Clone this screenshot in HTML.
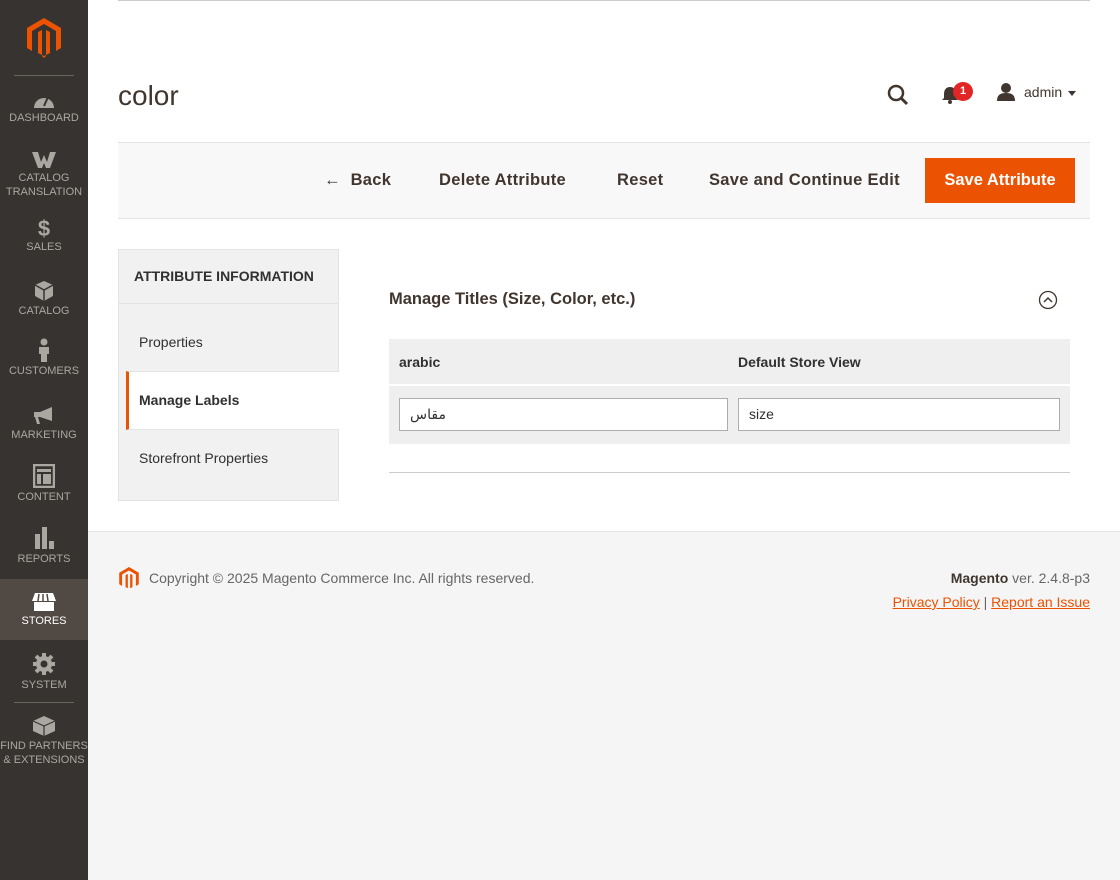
<!DOCTYPE html>
<html><head><meta charset="utf-8"><style>
*{box-sizing:border-box;margin:0;padding:0}
body{width:1120px;height:880px;font-family:"Liberation Sans","DejaVu Sans",sans-serif;background:#fff;position:relative;overflow:hidden;color:#303030}
.side{position:absolute;left:0;top:0;width:88px;height:880px;background:#373330}
.item{position:absolute;left:0;width:88px;text-align:center;color:#aaa6a0;font-size:11px;line-height:14px}
.item svg{display:block;margin:0 auto 2px}
.sep{position:absolute;left:14px;width:60px;height:1px;background:#6a645e}
.abs{position:absolute}
.btn{position:absolute;top:171px;font-size:16.5px;font-weight:bold;color:#41362f;letter-spacing:.3px}
</style></head><body>
<div class="side">
<svg class="abs" style="left:27px;top:18px" width="34" height="40" viewBox="0 0 34 40"><path d="M17 0L34 10V30L29 33V13L17 6L5 13V33L0 30V10Z" fill="#eb5202"/><path d="M11 14L15 12V37L11 35Z M19 12L23 14V35L19 37Z M15 38L17 40L19 38V37L17 38L15 37Z" fill="#eb5202"/></svg>
<div class="sep" style="top:75px"></div>
<div class="item" style="top:91px"><svg width="24" height="18" viewBox="0 0 24 18"><path d="M2 17A10 10 0 1 1 22 17Z" fill="#aaa6a0"/><path d="M12 15L16 6" stroke="#373330" stroke-width="2"/></svg>DASHBOARD</div>
<div class="item" style="top:151px"><svg width="26" height="18" viewBox="0 0 26 18"><path d="M1 1H7L10 11L13 4L16 11L19 1H25L19 17H15L13 12L11 17H7Z" fill="#aaa6a0"/></svg>CATALOG<br>TRANSLATION</div>
<div class="item" style="top:218px"><div style="font-size:22px;font-weight:bold;line-height:22px;color:#aaa6a0">$</div>SALES</div>
<div class="item" style="top:280px"><svg width="22" height="22" viewBox="0 0 22 22"><path d="M11 1L20 5V16L11 21L2 16V5Z" fill="#aaa6a0"/><path d="M2 5L11 10L20 5M11 10V21" stroke="#373330" stroke-width="1.5" fill="none"/></svg>CATALOG</div>
<div class="item" style="top:338px"><svg width="14" height="24" viewBox="0 0 14 24"><circle cx="7" cy="4" r="3.5" fill="#aaa6a0"/><path d="M2 9H12V16H10V24H4V16H2Z" fill="#aaa6a0"/></svg>CUSTOMERS</div>
<div class="item" style="top:406px"><svg width="24" height="20" viewBox="0 0 24 20"><path d="M2 6H8L20 1V15L8 11H6L8 18H5L3 11H2Z" fill="#aaa6a0"/></svg>MARKETING</div>
<div class="item" style="top:464px"><svg width="22" height="24" viewBox="0 0 22 24"><rect x="1" y="1" width="20" height="22" fill="none" stroke="#aaa6a0" stroke-width="2.5"/><rect x="4" y="5" width="14" height="3" fill="#aaa6a0"/><rect x="4" y="10" width="4" height="10" fill="#aaa6a0"/><rect x="10" y="10" width="8" height="10" fill="#aaa6a0"/></svg>CONTENT</div>
<div class="item" style="top:526px"><svg width="22" height="24" viewBox="0 0 22 24"><rect x="2" y="8" width="5" height="15" fill="#aaa6a0"/><rect x="9" y="1" width="5" height="22" fill="#aaa6a0"/><rect x="16" y="15" width="5" height="8" fill="#aaa6a0"/></svg>REPORTS</div>
<div class="abs" style="left:0;top:579px;width:88px;height:61px;background:#514943"></div>
<div class="item" style="top:592px;color:#fff"><svg width="26" height="20" viewBox="0 0 26 20"><path d="M4 1H22L25 9H1Z" fill="#fff"/><path d="M8 2L7 9M12 2V9M16 2L17 9" stroke="#514943" stroke-width="1.5"/><rect x="3" y="10" width="20" height="9" fill="#fff"/></svg>STORES</div>
<div class="item" style="top:652px"><svg width="24" height="24" viewBox="0 0 24 24"><circle cx="12" cy="12" r="8" fill="#aaa6a0"/><path d="M12 1V23M1 12H23M4 4L20 20M20 4L4 20" stroke="#aaa6a0" stroke-width="4"/><circle cx="12" cy="12" r="3.5" fill="#373330"/></svg>SYSTEM</div>
<div class="sep" style="top:702px"></div>
<div class="item" style="top:713px"><svg width="24" height="24" viewBox="0 0 24 24"><path d="M12 3L23 8V18L12 23L1 18V8Z" fill="#aaa6a0"/><path d="M1 8L12 13L23 8M12 13V23" stroke="#373330" stroke-width="1.2" fill="none"/></svg>FIND PARTNERS<br>&amp; EXTENSIONS</div>
</div>

<div class="abs" style="left:118px;top:0;width:972px;height:1px;background:#ccc"></div>
<div class="abs" style="left:118px;top:80px;font-size:28px;color:#41362f">color</div>
<svg class="abs" style="left:886px;top:83px" width="24" height="24" viewBox="0 0 24 24"><circle cx="10" cy="10" r="7" fill="none" stroke="#41362f" stroke-width="2.5"/><path d="M15 15L21 21" stroke="#41362f" stroke-width="3"/></svg>
<svg class="abs" style="left:941px;top:86px" width="18" height="18" viewBox="0 0 18 18"><path d="M9 1C5 1 3 4 3 8V12L1 14H17L15 12V8C15 4 13 1 9 1Z" fill="#41362f"/><circle cx="9" cy="16" r="2" fill="#41362f"/></svg>
<div class="abs" style="left:953px;top:82px;width:20px;height:19px;border-radius:50%;background:#e22626;color:#fff;font-size:11px;font-weight:bold;text-align:center;line-height:19px">1</div>
<svg class="abs" style="left:996px;top:82px" width="20" height="20" viewBox="0 0 20 20"><circle cx="10" cy="6" r="5" fill="#41362f"/><path d="M1 19C1 13 4 11 10 11C16 11 19 13 19 19Z" fill="#41362f"/></svg>
<div class="abs" style="left:1024px;top:84px;font-size:14px;color:#41362f">admin</div>
<div class="abs" style="left:1068px;top:91px;border:4px solid transparent;border-top:5px solid #41362f"></div>

<div class="abs" style="left:118px;top:142px;width:972px;height:77px;background:#f8f8f8;border-top:1px solid #e3e3e3;border-bottom:1px solid #e3e3e3"></div>
<div class="btn" style="left:324px">&#8592;&nbsp; Back</div>
<div class="btn" style="left:439px">Delete Attribute</div>
<div class="btn" style="left:617px">Reset</div>
<div class="btn" style="left:709px">Save and Continue Edit</div>
<div class="abs" style="left:925px;top:158px;width:150px;height:45px;background:#eb5202;color:#fff;font-size:16.5px;font-weight:bold;text-align:center;line-height:45px">Save Attribute</div>

<div class="abs" style="left:118px;top:249px;width:221px;height:252px;background:#f1f1f1;border:1px solid #e3e3e3"></div>
<div class="abs" style="left:134px;top:268px;font-size:14px;font-weight:bold;color:#303030">ATTRIBUTE INFORMATION</div>
<div class="abs" style="left:119px;top:303px;width:219px;height:1px;background:#e3e3e3"></div>
<div class="abs" style="left:139px;top:334px;font-size:14px">Properties</div>
<div class="abs" style="left:126px;top:371px;width:213px;height:59px;background:#fff;border-left:3px solid #eb5202;border-top:1px solid #e3e3e3;border-bottom:1px solid #e3e3e3"></div>
<div class="abs" style="left:139px;top:392px;font-size:14px;font-weight:bold">Manage Labels</div>
<div class="abs" style="left:139px;top:450px;font-size:14px">Storefront Properties</div>

<div class="abs" style="left:389px;top:290px;font-size:16.5px;font-weight:bold;color:#41362f">Manage Titles (Size, Color, etc.)</div>
<svg class="abs" style="left:1038px;top:290px" width="20" height="20" viewBox="0 0 20 20"><circle cx="10" cy="10" r="8.5" fill="none" stroke="#41362f" stroke-width="1.3"/><path d="M6 12L10 8L14 12" fill="none" stroke="#41362f" stroke-width="1.5"/></svg>
<div class="abs" style="left:389px;top:339px;width:681px;height:105px;background:#efefef"></div>
<div class="abs" style="left:389px;top:384px;width:681px;height:2px;background:#fff"></div>
<div class="abs" style="left:399px;top:354px;font-size:14px;font-weight:bold">arabic</div>
<div class="abs" style="left:738px;top:354px;font-size:14px;font-weight:bold">Default Store View</div>
<div class="abs" style="left:399px;top:398px;width:329px;height:33px;background:#fff;border:1px solid #adadad;font-size:14px;line-height:31px;padding-left:10px">مقاس</div>
<div class="abs" style="left:738px;top:398px;width:322px;height:33px;background:#fff;border:1px solid #adadad;font-size:14px;line-height:31px;padding-left:10px">size</div>
<div class="abs" style="left:389px;top:472px;width:681px;height:1px;background:#ccc"></div>

<div class="abs" style="left:88px;top:531px;width:1032px;height:349px;background:#f5f5f5;border-top:1px solid #e3e3e3"></div>
<svg class="abs" style="left:119px;top:567px" width="20" height="23" viewBox="0 0 34 40"><path d="M17 0L34 10V30L29 33V13L17 6L5 13V33L0 30V10Z" fill="#eb5202"/><path d="M11 14L15 12V37L11 35Z M19 12L23 14V35L19 37Z" fill="#eb5202"/></svg>
<div class="abs" style="left:149px;top:570px;font-size:14px;color:#666">Copyright © 2025 Magento Commerce Inc. All rights reserved.</div>
<div class="abs" style="right:30px;top:570px;font-size:14px;color:#666"><b style="color:#41362f">Magento</b> ver. 2.4.8-p3</div>
<div class="abs" style="right:30px;top:594px;font-size:14px;color:#666"><span style="color:#eb5202;text-decoration:underline">Privacy Policy</span> | <span style="color:#eb5202;text-decoration:underline">Report an Issue</span></div>
</body></html>
